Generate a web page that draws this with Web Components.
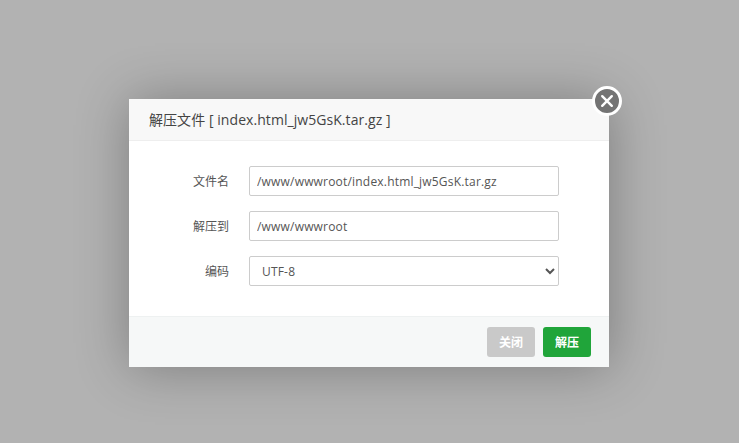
<!DOCTYPE html>
<html lang="zh">
<head>
<meta charset="utf-8">
<title>解压文件</title>
<style>
html,body{margin:0;padding:0;height:100%;overflow:hidden}
body{background:#b2b2b2;font-family:"Open Sans","Noto Sans CJK SC",sans-serif;font-size:12px;color:#555}
</style>
</head>
<body>
<template id="t-overlay">
<style>
:host{display:flex;justify-content:center;align-items:flex-start;box-sizing:border-box;width:739px;height:443px;padding:99px 0 0 0}
</style>
<slot></slot>
</template>
<template id="t-dialog">
<style>
:host{display:flex;flex-direction:column;position:relative;box-sizing:border-box;width:480px;height:268px;background:#fff;box-shadow:1px 1px 50px rgba(0,0,0,.3);margin-left:-1px}
header{box-sizing:border-box;height:42px;padding:0 20px 2px;display:flex;align-items:center;background:#f8f8f8;border-bottom:1px solid #eee;color:#444;font-size:14px;letter-spacing:.06px}
main{flex:1;display:flex;flex-direction:column;gap:15px;padding:25px 50px 0 0}
footer{box-sizing:border-box;height:51px;display:flex;justify-content:flex-end;align-items:flex-start;gap:8px;padding:10px 18px 0 0;background:#f6f8f8;border-top:1px solid #eef1f1}
</style>
<header><slot name="title"></slot></header>
<main><slot></slot></main>
<footer><slot name="actions"></slot></footer>
<slot name="close"></slot>
</template>
<template id="t-close">
<style>
:host{display:block;position:absolute;top:-13px;right:-13px;width:30px;height:30px;box-sizing:border-box;border-radius:50%;background:#747474;border:3px solid #fff;cursor:pointer}
svg{display:block;width:24px;height:24px}
</style>
<svg viewBox="0 0 24 24" fill="none" stroke="#fff" stroke-width="2.4" stroke-linecap="round"><path d="M7.2 7.2 16.8 16.8M16.8 7.2 7.2 16.8"/></svg>
</template>
<template id="t-row">
<style>
:host{display:flex;align-items:center;height:30px;color:#555;font-size:12px}
label{box-sizing:border-box;width:100px;text-align:right;margin-right:20px;white-space:nowrap}
.ctl{width:310px;height:30px;display:flex}
</style>
<label><slot name="label"></slot></label>
<div class="ctl"><slot></slot></div>
</template>
<template id="t-input">
<style>
:host{display:block;width:310px;height:30px}
input{box-sizing:border-box;display:block;width:100%;height:100%;margin:0;padding:0 7px;border:1px solid #ccc;border-radius:2px;background:#fff;color:#555;font:12px "Open Sans","Noto Sans CJK SC",sans-serif;letter-spacing:.19px;outline:none}
</style>
<input type="text">
</template>
<template id="t-select">
<style>
:host{display:block;width:310px;height:30px}
select{box-sizing:border-box;display:block;width:100%;height:100%;margin:0;padding:0 8px;border:1px solid #ccc;border-radius:2px;background:#fff;color:#555;font:12px "Open Sans","Noto Sans CJK SC",sans-serif;letter-spacing:.19px;outline:none}
</style>
<select><option>UTF-8</option><option>GBK</option></select>
</template>
<template id="t-button">
<style>
:host{display:inline-flex;align-items:center;justify-content:center;box-sizing:border-box;width:48px;height:30px;border-radius:3px;background:var(--bg,#20a53a);color:#fff;font-size:12px;font-weight:700;cursor:pointer}
</style>
<slot></slot>
</template>

<bt-overlay>
  <bt-dialog>
    <span slot="title">解压文件 [ index.html_jw5GsK.tar.gz ]</span>
    <bt-row><span slot="label">文件名</span><bt-input value="/www/wwwroot/index.html_jw5GsK.tar.gz"></bt-input></bt-row>
    <bt-row><span slot="label">解压到</span><bt-input value="/www/wwwroot"></bt-input></bt-row>
    <bt-row><span slot="label">编码</span><bt-select></bt-select></bt-row>
    <bt-button slot="actions" style="--bg:#c9c9c9">关闭</bt-button>
    <bt-button slot="actions">解压</bt-button>
    <bt-close slot="close"></bt-close>
  </bt-dialog>
</bt-overlay>
<script>
function def(tag,tpl,init){
  customElements.define(tag,class extends HTMLElement{
    constructor(){super();this.attachShadow({mode:'open'}).appendChild(document.getElementById(tpl).content.cloneNode(true));}
    connectedCallback(){if(init)init(this);}
  });
}
def('bt-overlay','t-overlay');
def('bt-dialog','t-dialog');
def('bt-close','t-close');
def('bt-row','t-row');
def('bt-input','t-input',function(el){el.shadowRoot.querySelector('input').value=el.getAttribute('value')||'';});
def('bt-select','t-select');
def('bt-button','t-button');
</script>
</body>
</html>
